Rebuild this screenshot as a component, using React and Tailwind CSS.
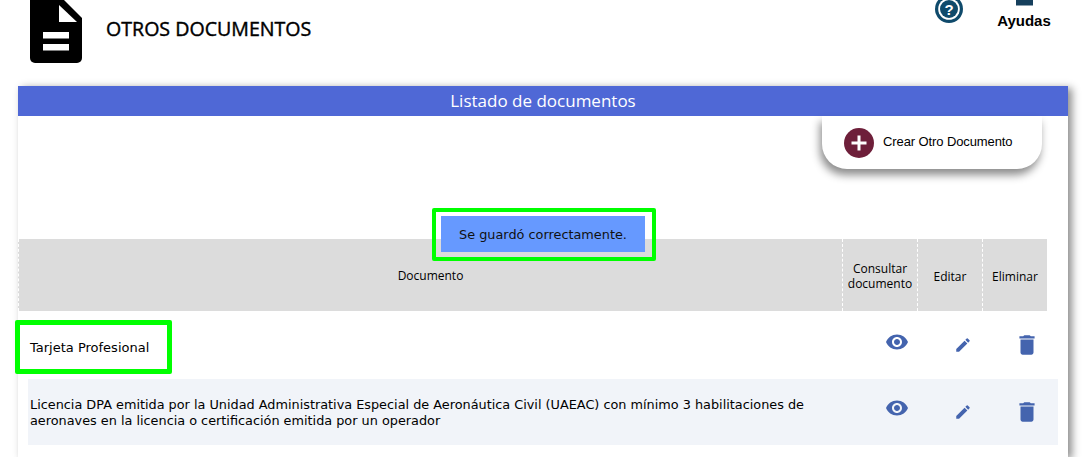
const sans = "font-['Liberation_Sans',sans-serif]";

function Eye() {
  return (
    <svg viewBox="0 0 24 24" className="w-[24px] h-[24px] fill-[#4464ae]">
      <path d="M12 4.5C7 4.5 2.73 7.61 1 12c1.73 4.39 6 7.5 11 7.5s9.27-3.11 11-7.5c-1.73-4.39-6-7.5-11-7.5zM12 17c-2.76 0-5-2.24-5-5s2.24-5 5-5 5 2.24 5 5-2.24 5-5 5zm0-8c-1.66 0-3 1.34-3 3s1.34 3 3 3 3-1.34 3-3-1.34-3-3-3z" />
    </svg>
  );
}
function Pencil() {
  return (
    <svg viewBox="0 0 24 24" className="w-[18px] h-[18px] fill-[#4464ae]">
      <path d="M3 17.25V21h3.75L17.81 9.94l-3.75-3.75L3 17.25zM20.71 7.04a1 1 0 0 0 0-1.41l-2.34-2.34a1 1 0 0 0-1.41 0l-1.83 1.83 3.75 3.75 1.83-1.83z" />
    </svg>
  );
}
function Trash() {
  return (
    <svg viewBox="0 0 24 24" className="w-[26px] h-[26px] fill-[#4464ae]">
      <path d="M6 19c0 1.1.9 2 2 2h8c1.1 0 2-.9 2-2V7H6v12zM19 4h-3.5l-1-1h-5l-1 1H5v2h14V4z" />
    </svg>
  );
}

function Row({ text, tinted, eyeShift, textShift, textClass, iconShift }) {
  return (
    <div className={`flex h-[66px] ml-[10px] w-[1030px] items-center ${tinted ? "bg-[#f1f4f9]" : ""}`}>
      <div className={`w-[831px] pl-[2px] leading-[16px] text-black font-['DejaVu_Sans',sans-serif] ${textClass}`} style={{ marginTop: textShift }}>{text}</div>
      <div className="w-[75px] flex justify-center" style={{ marginTop: eyeShift }}><Eye /></div>
      <div className="w-[56px] flex justify-center pl-px" style={{ marginTop: iconShift }}><Pencil /></div>
      <div className="w-[68px] flex justify-center pl-[5px]" style={{ marginTop: iconShift }}><Trash /></div>
    </div>
  );
}

function HeadCell({ className, children }) {
  return (
    <div className={`flex items-center justify-center text-center pt-[2px] border-l border-dashed border-white text-[12px] leading-[15px] text-black ${className}`}>
      {children}
    </div>
  );
}

export default function App() {
  return (
    <div className="w-[1082px] h-[457px] overflow-hidden bg-white relative font-['Open_Sans',sans-serif]">
      <header className="h-[86px] flex relative">
        <svg viewBox="0 0 52 66" className="w-[52px] h-[66px] ml-[30px] -mt-[3px] shrink-0">
          <path d="M4 0H31L52 21V61a5 5 0 0 1-5 5H5a5 5 0 0 1-5-5V4a4 4 0 0 1 4-4z" fill="#000" />
          <path d="M29 8L47 25H29z" fill="#fff" />
          <rect x="13" y="35" width="26" height="6.5" fill="#fff" />
          <rect x="13" y="47" width="26" height="6.5" fill="#fff" />
        </svg>
        <h1 className="ml-[24px] mt-[17px] h-[24px] text-[19.6px] leading-[24px] font-normal text-black [-webkit-text-stroke:0.4px_black]">OTROS DOCUMENTOS</h1>
        <div className="absolute left-[935px] -top-[5px]">
          <svg viewBox="0 0 28 28" className="w-[28px] h-[28px]">
            <circle cx="14" cy="14" r="14" fill="#0f4a6b" />
            <circle cx="14" cy="14" r="10.8" fill="#fff" />
            <circle cx="14" cy="14" r="9" fill="#0f4a6b" />
            <text x="14" y="19.5" textAnchor="middle" fontSize="15" fontWeight="700" fill="#fff" fontFamily="Liberation Sans">?</text>
          </svg>
        </div>
        <div className={`absolute left-[990px] top-0 w-[68px] text-center ${sans}`}>
          <svg viewBox="0 0 17 6" className="w-[17px] h-[6px] ml-[26px] block">
            <path d="M0 0h17v5.5H0z" fill="#163f5c" />
          </svg>
          <div className="mt-[6px] text-[15px] leading-[18px] font-bold text-black">Ayudas</div>
        </div>
      </header>

      <main className="relative ml-[18px] w-[1050px] h-[371px] shadow-[4px_2px_8px_rgba(0,0,0,0.45)] bg-white">
        <div className="h-[30px] bg-[#4f68d6] text-white text-center text-[17px] leading-[30px]">Listado de documentos</div>

        <div className="flex justify-end pr-[26px]">
          <div className={`w-[220px] h-[53px] bg-white rounded-b-[25px] shadow-[-2px_6px_8px_rgba(0,0,0,0.45)] flex items-center pl-[22px] ${sans}`}>
            <svg viewBox="0 0 30 30" className="w-[30px] h-[30px] shrink-0">
              <circle cx="15" cy="15" r="15" fill="#6e1f3a" />
              <path d="M13.5 7.5h3v6h6v3h-6v6h-3v-6h-6v-3h6z" fill="#fff" />
            </svg>
            <span className="ml-[9px] -mt-[2px] text-[13px] text-black tracking-[-0.1px] whitespace-nowrap">Crear Otro Documento</span>
          </div>
        </div>

        <div className="mt-[70px] w-[1029px] h-[72px] bg-[#dcdcdc] flex border-l border-dashed border-white">
          <div className="w-[823px] flex items-center justify-center pt-[2px] text-[12px] text-black">Documento</div>
          <HeadCell className="w-[75px]">Consultar<br />documento</HeadCell>
          <HeadCell className="w-[65px]">Editar</HeadCell>
          <HeadCell className="w-[65px]">Eliminar</HeadCell>
        </div>

        <div className="h-[68px] flex flex-col justify-center">
          <Row text="Tarjeta Profesional" textClass="text-[13px]" eyeShift="-6px" textShift="5px" />
        </div>
        <Row
          tinted
          eyeShift="-8px"
          textShift="1px"
          iconShift="-1px"
          textClass="text-[12.83px]"
          text={<>Licencia DPA emitida por la Unidad Administrativa Especial de Aeronáutica Civil (UAEAC) con mínimo 3 habilitaciones de<br />aeronaves en la licencia o certificación emitida por un operador</>}
        />

        <div className="absolute left-[423px] top-[130px] w-[204px] h-[36px] bg-[#6699ff] flex items-center justify-center pt-[2px] text-[12.85px] text-[#111] font-['DejaVu_Sans',sans-serif] whitespace-nowrap">
          Se guardó correctamente.
        </div>
      </main>

      <div className="absolute left-[432px] top-[208px] w-[224px] h-[53px] border-[4px] border-[#00ff00] rounded-[2px]" />
      <div className="absolute left-[15px] top-[320px] w-[157px] h-[54px] border-[5px] border-[#00ff00] rounded-[2px]" />
    </div>
  );
}
